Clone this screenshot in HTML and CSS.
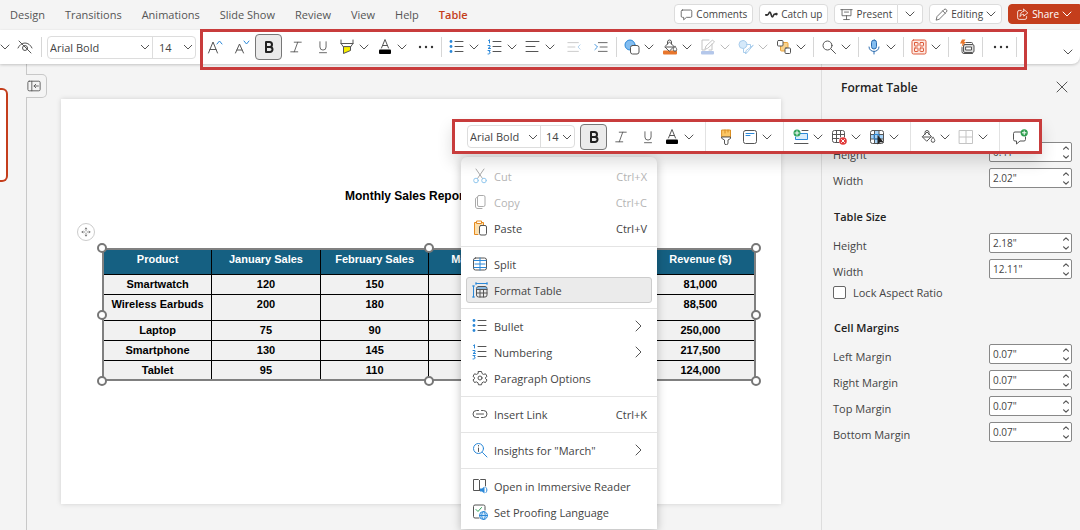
FILE: index.html
```html
<!DOCTYPE html>
<html lang="en">
<head>
    <meta charset="utf-8">
    <title>Monthly Sales Report</title>
    <link rel="stylesheet" href="styles.css">
</head>
<body>

<!-- icon set -->
<svg class="icon-defs" width="0" height="0" aria-hidden="true">
    <symbol id="chev" viewBox="0 0 10 10"><path d="M1 3l4 4 4-4"/></symbol>
    <symbol id="chev-right" viewBox="0 0 10 14"><path d="M2 2l5 5-5 5"/></symbol>
    <symbol id="eye-off" viewBox="0 0 16 16"><path d="M2 2l12 12M1 9c1.500-3 4-5 7-5s5.500 2 7 5"/><circle cx="8" cy="9" r="2.500"/></symbol>
    <symbol id="grow" viewBox="0 0 16 16"><path d="M1.500 14L6 3l4.500 11M3 10.500h6"/><path class="blue" d="M10 5l2.500-3L15 5"/></symbol>
    <symbol id="shrink" viewBox="0 0 16 16"><path d="M1.500 14L5.500 5l4 9M3 11h5"/><path class="blue" d="M10 2l2.500 3L15 2"/></symbol>
    <symbol id="bold" viewBox="0 0 16 16"><path class="heavy" d="M5 3h3.500a2.500 2.500 0 0 1 0 5H5zM5 8h4a2.500 2.500 0 0 1 0 5H5z"/></symbol>
    <symbol id="italic" viewBox="0 0 16 16"><path d="M6 2.500h8M2 13.500h8M10 2.500l-4 11"/></symbol>
    <symbol id="underline" viewBox="0 0 16 16"><path d="M4.500 2v6a3.500 3.500 0 0 0 7 0V2M4 14.500h8"/></symbol>
    <symbol id="marker" viewBox="0 0 16 16"><path d="M2 1v3.500l2.500 3.500h7L14 4.500V1M2 4.500h12"/><path d="M4.500 8v6.500l7-3V8z" fill="#f7ee00"/></symbol>
    <symbol id="font-color" viewBox="0 0 16 16"><path d="M4.500 9L8 .500 11.500 9M5.500 6.500h5"/><rect x="2" y="10.500" width="12" height="4.500" rx="1" fill="#000" stroke="none"/></symbol>
    <symbol id="more" viewBox="0 0 16 16"><g fill="#333" stroke="none"><circle cx="2" cy="8" r="1.200"/><circle cx="8" cy="8" r="1.200"/><circle cx="14" cy="8" r="1.200"/></g></symbol>
    <symbol id="bullets" viewBox="0 0 16 16"><path d="M6 2.500h8M6 7.500h8M6 12.500h8"/><g fill="#2b88d8" stroke="none"><circle cx="2" cy="2.500" r="1.400"/><circle cx="2" cy="7.500" r="1.400"/><circle cx="2" cy="12.500" r="1.400"/></g></symbol>
    <symbol id="numbers" viewBox="0 0 16 16"><path d="M6 2.500h8M6 7.500h8M6 12.500h8"/><path class="blue" d="M1.500 1.500l1-.800V4M1 6.500h2V8L1 9.500h2.500M1 11.500h2.200L2 13c2 0 1.500 2.300-1 2"/></symbol>
    <symbol id="align" viewBox="0 0 16 16"><path d="M1 2.500h13M1 7.500h9M1 12.500h12"/></symbol>
    <symbol id="outdent" viewBox="0 0 16 16"><path class="pale" d="M1 3h12M1 8h8M1 13h12"/><path class="pale-blue" d="M15 5.500L12.500 8l2.500 2.500"/></symbol>
    <symbol id="indent" viewBox="0 0 16 16"><path d="M5 3h10M7 8h8M5 13h10"/><path class="blue" d="M1 5L4 8l-3 3"/></symbol>
    <symbol id="shapes" viewBox="0 0 16 16"><circle cx="6" cy="6" r="5" fill="#83bdf0" stroke="#2b88d8"/><rect x="6.500" y="6.500" width="8.500" height="8.500" rx="2" fill="#fff"/></symbol>
    <symbol id="bucket" viewBox="0 0 16 16"><path d="M2.500 7.500L7 3l4.500 4.500L7 12zM5 5.500V3.500a2 2 0 0 1 4 0V5.500M3 8h8"/><path d="M13 8.500c1.300 1.500 1.800 2.200 1.800 3a1.800 1.800 0 0 1-3.600 0c0-.800.500-1.500 1.800-3z"/></symbol>
    <symbol id="fill" viewBox="0 0 16 16"><rect x="1" y="11.500" width="14" height="4" rx="1" fill="#e8762c" stroke="none"/><path d="M3 7.500L7.500 3l4.500 4.500-4.500 4.500z" fill="#fff"/><path d="M5.500 5V3a2 2 0 0 1 4 0v2M4 8h7.500"/><path d="M13 7.500c1.200 1.500 1.700 2.200 1.700 3a1.700 1.700 0 0 1-3.400 0c0-.800.500-1.500 1.700-3z" fill="#fff"/></symbol>
    <symbol id="outline" viewBox="0 0 16 16"><path class="pale" d="M9 1H2v10h3M12 5v6H9M5 10l1-3 6.500-6 2 2L8 9z"/><rect x="1" y="12" width="13" height="3.500" rx="1" fill="#b4c7ea" stroke="none"/></symbol>
    <symbol id="effects" viewBox="0 0 16 16"><circle cx="5" cy="5.500" r="4" fill="#d5e9fa" stroke="#a9cdec"/><path class="pale-blue" d="M9 5.500h3.500v3M5.500 10v3.500H8M15 6.500L9.500 13 7.500 15l.500-3z"/></symbol>
    <symbol id="arrange" viewBox="0 0 16 16"><rect x="4.500" y="3.500" width="7.500" height="8.500" rx="1" fill="#fbd28a" stroke="#e8a33c"/><rect x="1.500" y="1.500" width="5.500" height="5.500" rx="1" fill="#fff"/><rect x="9" y="9" width="5.500" height="5.500" rx="1" fill="#fff"/></symbol>
    <symbol id="search" viewBox="0 0 16 16"><circle cx="6.500" cy="6.500" r="4.500"/><path d="M10 10l4.500 4.500"/></symbol>
    <symbol id="mic" viewBox="0 0 16 16"><rect x="5.500" y="1" width="5" height="9" rx="2.500" fill="#83bdf0" stroke="#2b6cb0"/><path stroke="#2b6cb0" d="M3 8c0 6 10 6 10 0M8 12.500V15"/></symbol>
    <symbol id="addins" viewBox="0 0 16 16"><g stroke="#dd5b3a" fill="#fdeae4"><rect x="1" y="1" width="14" height="14" rx="1.500"/><rect x="3.500" y="3.500" width="3.500" height="3.500" rx=".500"/><rect x="9" y="3.500" width="3.500" height="3.500" rx=".500"/><rect x="3.500" y="9" width="3.500" height="3.500" rx=".500"/><rect x="9" y="9" width="3.500" height="3.500" rx=".500"/></g></symbol>
    <symbol id="designer" viewBox="0 0 16 16"><path d="M7 3.500h5.500a1 1 0 0 1 1 1v1M3 8.500v4a2 2 0 0 0 2 2h8.500"/><rect x="4.500" y="5.500" width="10.500" height="8" rx="1.500" fill="#ddd"/><path fill="#fff" d="M7 8h5.500v3H7z"/><path d="M3 .500h3.500L5 3h2L2.500 8l1-3.500H1z" fill="#e8762c" stroke="none"/></symbol>
    <symbol id="comment" viewBox="0 0 16 16"><path d="M3 2.500h10A1.500 1.500 0 0 1 14.500 4v6a1.500 1.500 0 0 1-1.500 1.500H8L4.500 14.500v-3H3A1.500 1.500 0 0 1 1.500 10V4A1.500 1.500 0 0 1 3 2.500z"/></symbol>
    <symbol id="catchup" viewBox="0 0 16 16"><path class="thick" d="M1 8.500h2C5 8.500 4.500 5 6 5s1.500 6 3 6 1-3.500 3-3.500h1"/><circle cx="1.800" cy="8.500" r="1.200" fill="#333" stroke="none"/><circle cx="14" cy="7.500" r="1.600" fill="#333" stroke="none"/></symbol>
    <symbol id="present" viewBox="0 0 16 16"><path d="M1 2h14M2.500 2v7.500h11V2M8 9.500V14M4.500 14.200h7M5.500 5h5"/></symbol>
    <symbol id="pencil" viewBox="0 0 16 16"><path d="M1.500 14.500l1-4 8.500-8.500a1.800 1.800 0 0 1 3 3L5.500 13.500zM9.500 3.500l3 3"/></symbol>
    <symbol id="share" viewBox="0 0 16 16"><path d="M6.500 3H4a2 2 0 0 0-2 2v7a2 2 0 0 0 2 2h7a2 2 0 0 0 2-2v-1.500M9.500 1.500L14.500 6l-5 4V7.800C7.500 7.800 6 8.500 5 10.500 5 6.500 7 4.500 9.500 4z"/></symbol>
    <symbol id="collapse" viewBox="0 0 16 16"><rect x="1" y="2.500" width="14" height="11" rx="1.500"/><path d="M5.500 2.500v11M13 8H8M10 6L8 8l2 2"/></symbol>
    <symbol id="move" viewBox="0 0 16 16"><path d="M8 1.500V6M8 10v4.500M1.500 8H6M10 8h4.500M6.500 3L8 1.500 9.500 3M6.500 13L8 14.500 9.500 13M3 6.500L1.500 8 3 9.500M13 6.500L14.500 8 13 9.500"/></symbol>
    <symbol id="close" viewBox="0 0 16 16"><path d="M3 3l10 10M13 3L3 13"/></symbol>
    <symbol id="brush" viewBox="0 0 16 16"><path d="M4 1h8.500v7H4z" fill="#fbc766" stroke="#d98e22"/><path d="M4 8h8.500v1.500L10 11v3a1.700 1.700 0 0 1-3.500 0v-3L4 9.500z" fill="#fff"/><path stroke="#d98e22" d="M7 1v3M10 1v2"/></symbol>
    <symbol id="layout" viewBox="0 0 16 16"><rect x="1.500" y="1.500" width="13" height="13" rx="2"/><path class="blue" d="M4 4.500h8M4 6.500h4"/></symbol>
    <symbol id="insert-row" viewBox="0 0 16 16"><path d="M9 1.500h6M1.500 14.500H15"/><path fill="#d8ecfb" class="blue" d="M6 4.500h8.500v6h-12V8"/><circle cx="4" cy="4" r="3.500" fill="#2fa35a" stroke="none"/><path stroke="#fff" d="M4 2v4M2 4h4"/></symbol>
    <symbol id="delete-row" viewBox="0 0 16 16"><path d="M8 13.500H3.500a2 2 0 0 1-2-2v-8a2 2 0 0 1 2-2h8a2 2 0 0 1 2 2V8M1.500 5.500h12M1.500 9.500H8M5.500 1.500v12M9.500 1.500V8"/><circle cx="12" cy="12" r="3.800" fill="#e13b3b" stroke="none"/><path stroke="#fff" d="M10.500 10.500l3 3M13.500 10.500l-3 3"/></symbol>
    <symbol id="select-table" viewBox="0 0 16 16"><rect x="1.500" y="1.500" width="13" height="13" rx="2" fill="#fff"/><path fill="#a5d2f7" stroke="none" d="M6 2h4v12H6zM2 6h12v4H2z"/><path d="M1.500 5.500h13M1.500 10h13M5.500 1.500v13M10 1.500v13"/><path class="blue" d="M5.500 5.500H10V10H5.500z"/><path d="M8.500 6v9.500l2.400-2.200 4 .200z" fill="#222" stroke="none"/></symbol>
    <symbol id="borders" viewBox="0 0 16 16"><path class="pale" d="M1.500 1.500h13v13h-13zM8 1.500v13M1.500 8h13"/></symbol>
    <symbol id="add-comment" viewBox="0 0 16 16"><path d="M8.500 3H3a1.500 1.500 0 0 0-1.500 1.500v6A1.500 1.500 0 0 0 3 12h1.500v3L8 12h4a1.500 1.500 0 0 0 1.500-1.500V8"/><circle cx="12.200" cy="3.800" r="3.600" fill="#2f9e4f" stroke="none"/><path stroke="#fff" d="M12.200 2v3.600M10.400 3.800H14"/></symbol>
    <symbol id="cut" viewBox="0 0 16 16"><path class="pale-dark" d="M4 1l6.500 9.500M12 1L5.500 10.500"/><circle class="light-blue" cx="4" cy="12.500" r="2.300"/><circle class="light-blue" cx="12" cy="12.500" r="2.300"/></symbol>
    <symbol id="copy" viewBox="0 0 16 16"><rect class="pale-dark" x="5.500" y="1.500" width="7.500" height="11" rx="1.500"/><path class="pale-dark" d="M5.500 3.500C4 3.500 3.500 4 3.500 5v7c0 1.800.700 2.500 2.500 2.500h4"/></symbol>
    <symbol id="paste" viewBox="0 0 16 16"><path d="M6 14.500H2.500V2.500h9V5" stroke="#e58a1f" fill="#fde0ae"/><rect x="5" y="1" width="4.500" height="2.500" fill="#fff" stroke="#e58a1f"/><rect x="7.500" y="5.500" width="7" height="9.500" rx="1.500" fill="#fff"/></symbol>
    <symbol id="split" viewBox="0 0 16 16"><rect x="1.500" y="2" width="13" height="12" rx="2"/><path class="blue" d="M2 4.500h12M2 11.500h12M8 2v12M3 8h10"/></symbol>
    <symbol id="format-table" viewBox="0 0 16 16"><path class="blue" d="M4 1.500h11M4 .500v2M15 .500v2M1.500 4v11M.500 4h2M.500 15h2"/><rect x="4.500" y="4.500" width="10.500" height="10.500" rx="2"/><path d="M4.500 7.500H15M4.500 11H15M8 7.500V15M11.500 7.500V15"/><path class="blue" d="M5 6h9.500"/></symbol>
    <symbol id="gear" viewBox="0 0 16 16"><circle cx="8" cy="8" r="2"/><path d="M6.500 1.500h3l.500 2 1.500.900 2-.600 1.500 2.600L13.500 7.500v1.200l1.500 1.200-1.500 2.600-2-.600-1.500.900-.500 2h-3L6 12.800l-1.500-.900-2 .600L1 9.900l1.500-1.200V7.500L1 6.400l1.500-2.600 2 .600L6 3.500z"/></symbol>
    <symbol id="link" viewBox="0 0 16 16"><path d="M6.500 4.500h-2a3.500 3.500 0 0 0 0 7h2M9.500 4.500h2a3.500 3.500 0 0 1 0 7h-2M4.500 8h7"/></symbol>
    <symbol id="insights" viewBox="0 0 16 16"><circle class="blue" cx="6.500" cy="6.500" r="5"/><path class="blue" d="M10.500 10.500L15 15"/><path d="M6.500 6v3.500M6.500 3.500v.500"/></symbol>
    <symbol id="reader" viewBox="0 0 16 16"><path d="M7.500 12.500H1.500v-11h5l1 1 1-1h5V8M7.500 2.500v10"/><path d="M8 10.500h2l2.500-2v7L10 13.500H8z" fill="#2b88d8" stroke="none"/><path class="blue" d="M14 9.500c1.300 1.500 1.300 3.500 0 5"/></symbol>
    <symbol id="proofing" viewBox="0 0 16 16"><path d="M7 14H3a1.500 1.500 0 0 1-1.500-1.500v-10A1.500 1.500 0 0 1 3 1h8.500A1.500 1.500 0 0 1 13 2.500V6"/><path stroke="#2fa35a" d="M4 5.500L6 7.500l3.500-4"/><circle cx="11.500" cy="11.500" r="4" fill="#d8ecfb" stroke="#2b88d8"/><path class="blue" d="M7.500 11.500h8M11.500 7.500c-2.500 2-2.500 6 0 8M11.500 7.500c2.500 2 2.500 6 0 8"/></symbol>
</svg>

<header class="topbar">
    <nav class="tabs">
        <a href="#">Design</a>
        <a href="#">Transitions</a>
        <a href="#">Animations</a>
        <a href="#">Slide Show</a>
        <a href="#">Review</a>
        <a href="#">View</a>
        <a href="#">Help</a>
        <a href="#" class="active">Table</a>
    </nav>
    <div class="actions">
        <button class="action"><svg class="icon"><use href="#comment"/></svg>Comments</button>
        <button class="action"><svg class="icon"><use href="#catchup"/></svg>Catch up</button>
        <div class="action-pair">
            <button class="action"><svg class="icon"><use href="#present"/></svg>Present</button>
            <button class="action" aria-label="Present options"><svg class="chev"><use href="#chev"/></svg></button>
        </div>
        <button class="action"><svg class="icon"><use href="#pencil"/></svg>Editing<svg class="chev"><use href="#chev"/></svg></button>
        <button class="action share"><svg class="icon"><use href="#share"/></svg>Share<svg class="chev"><use href="#chev"/></svg></button>
    </div>
</header>

<div class="ribbon">
    <div class="ribbon-start">
        <svg class="chev"><use href="#chev"/></svg>
        <button class="tool" aria-label="Hide"><svg class="icon"><use href="#eye-off"/></svg></button>
        <span class="sep"></span>
        <div class="combo">
            <select class="font-name" aria-label="Font"><option>Arial Bold</option></select>
            <select class="font-size" aria-label="Font size"><option>14</option></select>
        </div>
    </div>
    <div class="ribbon-tools">
        <button class="tool" aria-label="Increase font size"><svg class="icon"><use href="#grow"/></svg></button>
        <button class="tool" aria-label="Decrease font size"><svg class="icon"><use href="#shrink"/></svg></button>
        <button class="tool pressed" aria-label="Bold"><svg class="icon"><use href="#bold"/></svg></button>
        <button class="tool" aria-label="Italic"><svg class="icon small"><use href="#italic"/></svg></button>
        <button class="tool" aria-label="Underline"><svg class="icon small"><use href="#underline"/></svg></button>
        <button class="tool split" aria-label="Highlight"><svg class="icon"><use href="#marker"/></svg><svg class="chev"><use href="#chev"/></svg></button>
        <button class="tool split" aria-label="Font color"><svg class="icon"><use href="#font-color"/></svg><svg class="chev"><use href="#chev"/></svg></button>
        <button class="tool" aria-label="More font options"><svg class="icon"><use href="#more"/></svg></button>
        <span class="sep"></span>
        <button class="tool split" aria-label="Bullets"><svg class="icon"><use href="#bullets"/></svg><svg class="chev"><use href="#chev"/></svg></button>
        <button class="tool split" aria-label="Numbering"><svg class="icon"><use href="#numbers"/></svg><svg class="chev"><use href="#chev"/></svg></button>
        <button class="tool split" aria-label="Align"><svg class="icon"><use href="#align"/></svg><svg class="chev"><use href="#chev"/></svg></button>
        <button class="tool" aria-label="Decrease indent"><svg class="icon small"><use href="#outdent"/></svg></button>
        <button class="tool" aria-label="Increase indent"><svg class="icon small"><use href="#indent"/></svg></button>
        <span class="sep"></span>
        <button class="tool split" aria-label="Shapes"><svg class="icon"><use href="#shapes"/></svg><svg class="chev"><use href="#chev"/></svg></button>
        <button class="tool split" aria-label="Shape fill"><svg class="icon"><use href="#fill"/></svg><svg class="chev"><use href="#chev"/></svg></button>
        <button class="tool split off" aria-label="Shape outline"><svg class="icon"><use href="#outline"/></svg><svg class="chev"><use href="#chev"/></svg></button>
        <button class="tool split off" aria-label="Shape effects"><svg class="icon"><use href="#effects"/></svg><svg class="chev"><use href="#chev"/></svg></button>
        <button class="tool split" aria-label="Arrange"><svg class="icon"><use href="#arrange"/></svg><svg class="chev"><use href="#chev"/></svg></button>
        <span class="sep"></span>
        <button class="tool split" aria-label="Find"><svg class="icon"><use href="#search"/></svg><svg class="chev"><use href="#chev"/></svg></button>
        <span class="sep"></span>
        <button class="tool split" aria-label="Dictate"><svg class="icon"><use href="#mic"/></svg><svg class="chev"><use href="#chev"/></svg></button>
        <span class="sep"></span>
        <button class="tool split" aria-label="Add-ins"><svg class="icon"><use href="#addins"/></svg><svg class="chev"><use href="#chev"/></svg></button>
        <span class="sep"></span>
        <button class="tool" aria-label="Designer"><svg class="icon"><use href="#designer"/></svg></button>
        <span class="sep"></span>
        <button class="tool" aria-label="More commands"><svg class="icon"><use href="#more"/></svg></button>
        <span class="sep"></span>
    </div>
    <button class="ribbon-toggle" aria-label="Ribbon display options"><svg class="chev"><use href="#chev"/></svg></button>
</div>

<main class="workspace">
    <aside class="thumbs">
        <div class="thumb"></div>
    </aside>

    <section class="canvas">
        <button class="panel-toggle" aria-label="Collapse slide list"><svg class="icon small"><use href="#collapse"/></svg></button>
        <div class="slide">
            <h1 class="slide-title">Monthly Sales Report</h1>
            <div class="table-frame">
                <table class="sales">
                    <thead>
                        <tr><th>Product</th><th>January Sales</th><th>February Sales</th><th>March Sales</th><th></th><th>Revenue ($)</th></tr>
                    </thead>
                    <tbody>
                        <tr><td>Smartwatch</td><td>120</td><td>150</td><td></td><td></td><td>81,000</td></tr>
                        <tr class="tall"><td>Wireless Earbuds</td><td>200</td><td>180</td><td></td><td></td><td>88,500</td></tr>
                        <tr><td>Laptop</td><td>75</td><td>90</td><td></td><td></td><td>250,000</td></tr>
                        <tr><td>Smartphone</td><td>130</td><td>145</td><td></td><td></td><td>217,500</td></tr>
                        <tr><td>Tablet</td><td>95</td><td>110</td><td></td><td></td><td>124,000</td></tr>
                    </tbody>
                </table>
                <span class="move-handle"><svg class="icon small"><use href="#move"/></svg></span>
                <span class="handle top left"></span>
                <span class="handle top center"></span>
                <span class="handle top right"></span>
                <span class="handle middle left"></span>
                <span class="handle middle right"></span>
                <span class="handle bottom left"></span>
                <span class="handle bottom center"></span>
                <span class="handle bottom right"></span>
            </div>
        </div>
    </section>

    <aside class="pane">
        <div class="pane-head">
            <h2>Format Table</h2>
            <button class="close" aria-label="Close"><svg class="icon"><use href="#close"/></svg></button>
        </div>
        <div class="field">
            <label for="cell-h">Height</label>
            <div class="spin"><input type="text" id="cell-h" value='0.41"'><div class="steps"><button aria-label="Up"><svg><use href="#chev"/></svg></button><button aria-label="Down"><svg><use href="#chev"/></svg></button></div></div>
        </div>
        <div class="field">
            <label for="cell-w">Width</label>
            <div class="spin"><input type="text" id="cell-w" value='2.02"'><div class="steps"><button aria-label="Up"><svg><use href="#chev"/></svg></button><button aria-label="Down"><svg><use href="#chev"/></svg></button></div></div>
        </div>

        <h3>Table Size</h3>
        <div class="field">
            <label for="table-h">Height</label>
            <div class="spin"><input type="text" id="table-h" value='2.18"'><div class="steps"><button aria-label="Up"><svg><use href="#chev"/></svg></button><button aria-label="Down"><svg><use href="#chev"/></svg></button></div></div>
        </div>
        <div class="field">
            <label for="table-w">Width</label>
            <div class="spin"><input type="text" id="table-w" value='12.11"'><div class="steps"><button aria-label="Up"><svg><use href="#chev"/></svg></button><button aria-label="Down"><svg><use href="#chev"/></svg></button></div></div>
        </div>
        <div class="check">
            <input type="checkbox" id="lock">
            <label for="lock">Lock Aspect Ratio</label>
        </div>

        <h3>Cell Margins</h3>
        <div class="field">
            <label for="m-left">Left Margin</label>
            <div class="spin"><input type="text" id="m-left" value='0.07"'><div class="steps"><button aria-label="Up"><svg><use href="#chev"/></svg></button><button aria-label="Down"><svg><use href="#chev"/></svg></button></div></div>
        </div>
        <div class="field">
            <label for="m-right">Right Margin</label>
            <div class="spin"><input type="text" id="m-right" value='0.07"'><div class="steps"><button aria-label="Up"><svg><use href="#chev"/></svg></button><button aria-label="Down"><svg><use href="#chev"/></svg></button></div></div>
        </div>
        <div class="field">
            <label for="m-top">Top Margin</label>
            <div class="spin"><input type="text" id="m-top" value='0.07"'><div class="steps"><button aria-label="Up"><svg><use href="#chev"/></svg></button><button aria-label="Down"><svg><use href="#chev"/></svg></button></div></div>
        </div>
        <div class="field">
            <label for="m-bottom">Bottom Margin</label>
            <div class="spin"><input type="text" id="m-bottom" value='0.07"'><div class="steps"><button aria-label="Up"><svg><use href="#chev"/></svg></button><button aria-label="Down"><svg><use href="#chev"/></svg></button></div></div>
        </div>
    </aside>
</main>

<!-- floating toolbar and context menu -->
<div class="mini-toolbar">
    <div class="combo">
        <select class="font-name" aria-label="Font"><option>Arial Bold</option></select>
        <select class="font-size" aria-label="Font size"><option>14</option></select>
    </div>
    <button class="tool pressed" aria-label="Bold"><svg class="icon"><use href="#bold"/></svg></button>
    <button class="tool" aria-label="Italic"><svg class="icon small"><use href="#italic"/></svg></button>
    <button class="tool" aria-label="Underline"><svg class="icon small"><use href="#underline"/></svg></button>
    <button class="tool split" aria-label="Font color"><svg class="icon"><use href="#font-color"/></svg><svg class="chev"><use href="#chev"/></svg></button>
    <span class="sep"></span>
    <button class="tool" aria-label="Format painter"><svg class="icon"><use href="#brush"/></svg></button>
    <button class="tool split" aria-label="Layout"><svg class="icon"><use href="#layout"/></svg><svg class="chev"><use href="#chev"/></svg></button>
    <span class="sep"></span>
    <button class="tool split" aria-label="Insert"><svg class="icon"><use href="#insert-row"/></svg><svg class="chev"><use href="#chev"/></svg></button>
    <button class="tool split" aria-label="Delete"><svg class="icon"><use href="#delete-row"/></svg><svg class="chev"><use href="#chev"/></svg></button>
    <button class="tool split" aria-label="Select"><svg class="icon"><use href="#select-table"/></svg><svg class="chev"><use href="#chev"/></svg></button>
    <span class="sep"></span>
    <button class="tool split" aria-label="Shading"><svg class="icon"><use href="#bucket"/></svg><svg class="chev"><use href="#chev"/></svg></button>
    <button class="tool split" aria-label="Borders"><svg class="icon"><use href="#borders"/></svg><svg class="chev"><use href="#chev"/></svg></button>
    <span class="sep"></span>
    <button class="tool" aria-label="New comment"><svg class="icon"><use href="#add-comment"/></svg></button>
</div>

<div class="menu" role="menu">
    <button class="item" role="menuitem" disabled><svg class="icon"><use href="#cut"/></svg>Cut<kbd>Ctrl+X</kbd></button>
    <button class="item" role="menuitem" disabled><svg class="icon"><use href="#copy"/></svg>Copy<kbd>Ctrl+C</kbd></button>
    <button class="item" role="menuitem"><svg class="icon"><use href="#paste"/></svg>Paste<kbd>Ctrl+V</kbd></button>
    <hr>
    <button class="item" role="menuitem"><svg class="icon"><use href="#split"/></svg>Split</button>
    <button class="item hover" role="menuitem"><svg class="icon"><use href="#format-table"/></svg>Format Table</button>
    <hr>
    <button class="item" role="menuitem"><svg class="icon"><use href="#bullets"/></svg>Bullet<svg class="arrow"><use href="#chev-right"/></svg></button>
    <button class="item" role="menuitem"><svg class="icon"><use href="#numbers"/></svg>Numbering<svg class="arrow"><use href="#chev-right"/></svg></button>
    <button class="item" role="menuitem"><svg class="icon"><use href="#gear"/></svg>Paragraph Options</button>
    <hr>
    <button class="item" role="menuitem"><svg class="icon"><use href="#link"/></svg>Insert Link<kbd>Ctrl+K</kbd></button>
    <hr>
    <button class="item" role="menuitem"><svg class="icon"><use href="#insights"/></svg>Insights for "March"<svg class="arrow"><use href="#chev-right"/></svg></button>
    <hr>
    <button class="item" role="menuitem"><svg class="icon"><use href="#reader"/></svg>Open in Immersive Reader</button>
    <button class="item" role="menuitem"><svg class="icon"><use href="#proofing"/></svg>Set Proofing Language</button>
</div>

</body>
</html>
```
FILE: styles.css
```css
* {
    box-sizing: border-box;
}
body {
    display: flex;
    flex-direction: column;
    height: 100vh;
    margin: 0;
    overflow: hidden;
    position: relative;
    background: #f4f4f4;
    color: #444;
    font-family: "Open Sans", "Noto Sans", sans-serif;
    font-size: 11px;
}
button, input, select, kbd {
    font: inherit;
    color: inherit;
}
button {
    margin: 0;
    padding: 0;
    border: 0;
    background: none;
    white-space: nowrap;
}
svg {
    flex: none;
    fill: none;
    stroke: #555;
    stroke-width: 1px;
    stroke-linecap: round;
    stroke-linejoin: round;
}
.icon-defs {
    position: absolute;
}
.icon {
    width: 16px;
    height: 16px;
}
.icon.small {
    width: 14px;
    height: 14px;
}
.chev {
    width: 10px;
    height: 10px;
}
.blue { stroke: #2b88d8; }
.light-blue { stroke: #93c8ee; }
.pale-blue { stroke: #a9cdec; }
.pale { stroke: #c4c4c4; }
.pale-dark { stroke: #aaa; }
.heavy { stroke: #222; stroke-width: 2px; }
.thick { stroke: #333; stroke-width: 2px; }

/* top bar */
.topbar {
    display: flex;
    align-items: center;
    justify-content: space-between;
    height: 30px;
    flex: none;
    padding: 0 0 2px 10px;
}
.tabs {
    display: flex;
    gap: 20px;
}
.tabs a {
    color: #555;
    text-decoration: none;
}
.tabs .active {
    color: #c43e1c;
    font-weight: 600;
}
.actions {
    display: flex;
    gap: 6px;
    font-size: 10px;
}
.action {
    display: flex;
    align-items: center;
    gap: 3px;
    height: 20px;
    padding: 0 5px;
    border: 1px solid #dcdcdc;
    border-radius: 4px;
    background: #fff;
}
.action .icon {
    width: 13px;
    height: 13px;
}
.action-pair {
    display: flex;
}
.action-pair .action:first-child {
    border-radius: 4px 0 0 4px;
}
.action-pair .action:last-child {
    padding: 0 7px;
    border-left: 0;
    border-radius: 0 4px 4px 0;
}
.share {
    padding: 0 7px;
    border-color: #c43e1c;
    border-radius: 4px 0 0 4px;
    background: #c43e1c;
    color: #fff;
}
.share svg {
    stroke: #fff;
}

/* ribbon */
.ribbon {
    display: flex;
    align-items: flex-start;
    height: 34px;
    flex: none;
    background: #fff;
    border-radius: 0 0 8px 0;
    box-shadow: 0 1px 3px rgba(0, 0, 0, 0.2);
    position: relative;
    z-index: 1;
}
.ribbon-start {
    display: flex;
    align-items: center;
    gap: 1px;
    width: 200px;
    height: 34px;
}
.ribbon-tools {
    display: flex;
    align-items: center;
    flex: none;
    height: 41px;
    margin-top: -1px;
    padding: 0 6px 5px 1px;
    outline: 3px solid #c83c3c;
    outline-offset: -3px;
}
.ribbon-toggle {
    align-self: flex-end;
    height: 24px;
    margin-left: auto;
    padding: 0 7px;
}
.tool {
    display: flex;
    align-items: center;
    justify-content: center;
    flex: none;
    width: 27px;
    height: 26px;
    border-radius: 4px;
}
.tool.split {
    justify-content: flex-start;
    gap: 4px;
    width: 38px;
    padding-left: 3px;
}
.tool.off .chev {
    stroke: #bbb;
}
.tool.pressed {
    border: 1px solid #777;
    background: #ebebeb;
}
.sep {
    flex: none;
    width: 1px;
    height: 20px;
    margin: 0 4px 0 2px;
    background: #d6d6d6;
}
.combo {
    display: flex;
    border: 1px solid #ddd;
    border-radius: 4px;
    background: #fff;
}
.combo select {
    height: 21px;
    padding: 0 0 0 2px;
    border: 0;
    appearance: none;
    background: url("data:image/svg+xml,%3Csvg xmlns='http://www.w3.org/2000/svg' width='10' height='10' fill='none' stroke='%23555'%3E%3Cpath d='M1 3l4 4 4-4'/%3E%3C/svg%3E") no-repeat right 2px center;
}
.combo .font-name {
    width: 105px;
    border-right: 1px solid #ddd;
}
.combo .font-size {
    width: 42px;
    padding-left: 6px;
}

/* workspace */
.workspace {
    display: grid;
    grid-template-columns: 26px 1fr 259px;
    flex: 1;
    min-height: 0;
}
.thumbs {
    padding-top: 24px;
}
.thumb {
    width: 8px;
    height: 94px;
    border: 2px solid #c43e1c;
    border-left: 0;
    border-radius: 0 6px 6px 0;
    background: #fff;
}
.canvas {
    position: relative;
    padding: 35px 40px 0 34px;
    border-left: 1px solid #c8c8c8;
}
.panel-toggle {
    position: absolute;
    top: 10px;
    left: -1px;
    display: flex;
    align-items: center;
    justify-content: center;
    width: 21px;
    height: 24px;
    padding-right: 4px;
    border: 1px solid #c8c8c8;
    border-left: 0;
    border-radius: 0 5px 5px 0;
    background: #f4f4f4;
}
.slide {
    aspect-ratio: 16 / 9;
    padding: 90px 25px 0 41px;
    background: #fff;
    box-shadow: 0 0 5px rgba(0, 0, 0, 0.15);
    color: #000;
    font-family: "Liberation Sans", Arial, sans-serif;
}
.slide-title {
    margin: 0 0 45px;
    padding-left: 243px;
    font-size: 12px;
    line-height: 14px;
}
.table-frame {
    position: relative;
}
.sales {
    width: 100%;
    table-layout: fixed;
    border-collapse: collapse;
    border: 2px solid #808080;
    font-size: 11px;
    font-weight: bold;
    line-height: 14px;
    text-align: center;
}
.sales th, .sales td {
    height: 20px;
    padding: 2px 0;
    border: 1px solid #000;
    vertical-align: top;
    background: #f1f1f1;
}
.sales th {
    height: 25px;
    background: #156082;
    color: #fff;
}
.sales .tall td {
    height: 26px;
}
.handle {
    position: absolute;
    width: 10px;
    height: 10px;
    margin: -5px;
    border: 2px solid #777;
    border-radius: 50%;
    background: #fff;
}
.top { top: 0; }
.middle { top: 50%; }
.bottom { top: 100%; }
.left { left: 0; }
.center { left: 50%; }
.right { left: 100%; }
.move-handle {
    position: absolute;
    top: -25px;
    left: -25px;
    display: flex;
    align-items: center;
    justify-content: center;
    width: 18px;
    height: 18px;
    border: 1px solid #ccc;
    border-radius: 50%;
}
.move-handle .icon {
    width: 10px;
    height: 10px;
}

/* format pane */
.pane {
    padding: 0 8px 0 11px;
    border-left: 1px solid #ddd;
}
.pane-head {
    display: flex;
    align-items: center;
    justify-content: space-between;
    height: 46px;
    margin-bottom: 29px;
    padding: 0 2px 0 8px;
}
.pane h2, .pane h3 {
    margin: 0;
    color: #222;
    font-size: 12px;
    font-weight: 600;
}
.pane h3 {
    margin-top: 13px;
    padding-left: 1px;
    font-size: 11px;
    line-height: 26px;
}
.close {
    height: 16px;
}
.field {
    display: flex;
    align-items: center;
    justify-content: space-between;
    height: 26px;
}
.field label {
    padding-top: 4px;
}
.spin {
    display: flex;
    width: 83px;
    height: 20px;
    border: 1px solid #888;
    border-radius: 2px;
    background: #fff;
}
.spin input {
    flex: 1;
    min-width: 0;
    padding: 0 0 0 3px;
    border: 0;
    background: none;
    font-size: 10px;
}
.steps {
    display: flex;
    flex-direction: column;
    width: 11px;
}
.steps button {
    display: flex;
    flex: 1;
    align-items: center;
    justify-content: center;
}
.steps svg {
    width: 6px;
    height: 6px;
    stroke-width: 2px;
}
.steps button:first-child svg {
    transform: rotate(180deg);
}
.check {
    display: flex;
    align-items: center;
    gap: 7px;
    height: 20px;
}
.check input {
    appearance: none;
    width: 13px;
    height: 13px;
    margin: 0;
    border: 1px solid #666;
    border-radius: 2px;
    background: #fff;
}

/* floating toolbar */
.mini-toolbar {
    position: absolute;
    top: 119px;
    left: 452px;
    z-index: 3;
    display: flex;
    align-items: center;
    height: 35px;
    padding: 0 6px 0 12px;
    border: 3px solid #c83c3c;
    background: #fff;
    box-shadow: 0 8px 16px rgba(0, 0, 0, 0.14);
}
.mini-toolbar .combo {
    margin-right: 5px;
}
.mini-toolbar .font-name {
    width: 73px;
}
.mini-toolbar .font-size {
    width: 33px;
    padding-left: 5px;
}
.mini-toolbar .sep {
    height: 29px;
    margin: 0 6px;
    background: #e2e2e2;
}

/* context menu */
.menu {
    position: absolute;
    top: 157px;
    left: 461px;
    z-index: 2;
    width: 196px;
    padding: 6px 5px 4px;
    border-radius: 6px 6px 0 0;
    background: #fff;
    box-shadow: 0 2px 10px rgba(0, 0, 0, 0.25);
}
.menu hr {
    height: 1px;
    margin: 5px -5px 4px;
    border: 0;
    background: #e4e4e4;
}
.item {
    display: flex;
    align-items: center;
    gap: 6px;
    width: 100%;
    height: 26px;
    padding: 0 4px 0 5px;
    border: 1px solid transparent;
    border-radius: 3px;
}
.item:disabled {
    color: #b4b4b4;
}
.item.hover {
    border-color: #ccc;
    background: #ebebeb;
}
.item kbd {
    margin-left: auto;
}
.item .arrow {
    width: 10px;
    height: 14px;
    margin-left: auto;
    margin-right: 3px;
}
```
